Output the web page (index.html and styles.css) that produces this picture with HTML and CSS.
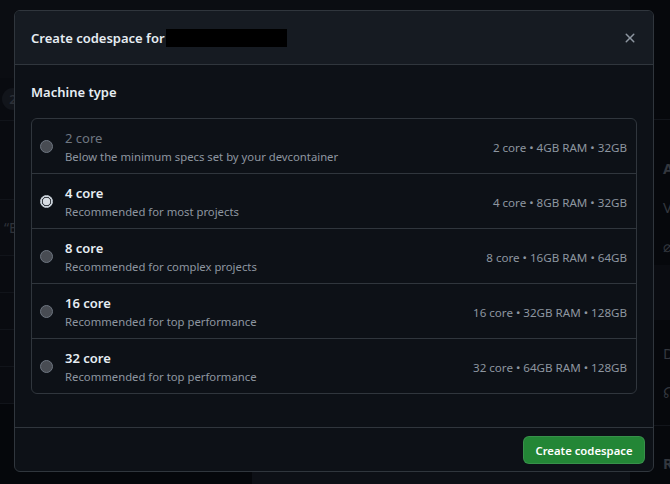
FILE: index.html
```html
<!DOCTYPE html>
<html lang="en">
<head>
<meta charset="utf-8">
<title>Create codespace</title>
<link rel="stylesheet" href="styles.css">
</head>
<body>
<div class="page">
  <div class="main">
    <div class="topbar"></div>
    <div class="prow first"><span class="counter">2</span></div>
    <div class="prow tall"></div>
    <div class="prow box"><span class="quote">“E</span></div>
    <div class="prow"></div>
    <div class="prow"></div>
    <div class="prow"></div>
    <div class="prow"></div>
    <div class="bottom">
      <div class="bottom-left"></div>
      <div class="bottom-panel"><span class="avatar"></span></div>
    </div>
  </div>
  <div class="side">
    <div class="side-top"></div>
    <div class="side-item h first">A</div>
    <div class="side-item">V</div>
    <div class="side-item">⌀</div>
    <div class="side-block"></div>
    <div class="side-item after-block">D</div>
    <div class="side-item">☊</div>
    <div class="side-sep"></div>
    <div class="side-item h last">R</div>
  </div>
</div>

<div class="dialog" role="dialog">
  <div class="dialog-header">
    <h1 class="dialog-title">Create codespace for <span class="redacted"></span></h1>
    <button class="close" aria-label="Close">
      <svg width="16" height="16" viewBox="0 0 16 16"><path d="M3.72 3.72a.75.75 0 0 1 1.06 0L8 6.94l3.22-3.22a.75.75 0 1 1 1.06 1.06L9.06 8l3.22 3.22a.75.75 0 1 1-1.06 1.06L8 9.06l-3.22 3.22a.75.75 0 0 1-1.06-1.06L6.94 8 3.72 4.78a.75.75 0 0 1 0-1.06Z" fill="currentColor"/></svg>
    </button>
  </div>
  <div class="dialog-body">
    <div class="label">Machine type</div>
    <ul class="machines">
      <li class="machine disabled">
        <span class="radio"></span>
        <div class="info"><div class="name">2 core</div><div class="desc">Below the minimum specs set by your devcontainer</div></div>
        <div class="specs">2 core • 4GB RAM • 32GB</div>
      </li>
      <li class="machine">
        <span class="radio checked"></span>
        <div class="info"><div class="name">4 core</div><div class="desc">Recommended for most projects</div></div>
        <div class="specs">4 core • 8GB RAM • 32GB</div>
      </li>
      <li class="machine">
        <span class="radio"></span>
        <div class="info"><div class="name">8 core</div><div class="desc">Recommended for complex projects</div></div>
        <div class="specs">8 core • 16GB RAM • 64GB</div>
      </li>
      <li class="machine">
        <span class="radio"></span>
        <div class="info"><div class="name">16 core</div><div class="desc">Recommended for top performance</div></div>
        <div class="specs">16 core • 32GB RAM • 128GB</div>
      </li>
      <li class="machine">
        <span class="radio"></span>
        <div class="info"><div class="name">32 core</div><div class="desc">Recommended for top performance</div></div>
        <div class="specs">32 core • 64GB RAM • 128GB</div>
      </li>
    </ul>
  </div>
  <div class="dialog-footer">
    <button class="btn-primary">Create codespace</button>
  </div>
</div>
</body>
</html>
```

FILE: styles.css
```css
* { box-sizing: border-box; }
html, body { margin: 0; padding: 0; }
body {
  width: 670px;
  height: 484px;
  overflow: hidden;
  background: #07090d;
  font-family: "Noto Sans", "Segoe UI", sans-serif;
  color: #e6edf3;
  position: relative;
}

/* dimmed page behind the dialog */
.page { display: flex; height: 484px; }
.main { flex: 1; display: flex; flex-direction: column; background: #090b10; }
.topbar { height: 78px; background: #0b0d12; }
.prow {
  height: 37px;
  border-bottom: 1px solid #11141a;
  display: flex;
  align-items: center;
  padding-left: 2px;
  color: #2a2e35;
  font-size: 14px;
  flex: none;
}
.prow.first { height: 43px; }
.prow.tall { height: 79px; }
.prow.box { height: 56px; background: #0a0c11; }
.counter {
  width: 22px; height: 22px; border-radius: 50%;
  background: #12151b; color: #2c3037;
  display: flex; align-items: center; justify-content: center;
  font-size: 13px; font-weight: 600;
}
.quote { padding-left: 2px; font-size: 14px; color: #2e3239; }
.bottom { flex: 1; display: flex; }
.bottom-left { width: 252px; background: #05070b; }
.bottom-panel { flex: 1; background: #0d1016; position: relative; overflow: hidden; }
.avatar {
  position: absolute; left: 165px; top: 0;
  width: 62px; height: 26px; border-radius: 50%;
  background: #22252b;
}
.side {
  width: 40px;
  background: #06080c;
  display: flex;
  flex-direction: column;
  padding-left: 33px;
  color: #33373e;
  font-size: 15px;
  font-weight: 600;
  overflow: hidden;
}
.side-top { height: 120px; border-bottom: 1px solid #12151b; margin-left: -33px; flex: none; }
.side-item { height: 39px; display: flex; align-items: center; font-weight: 400; flex: none; }
.side-item.h { font-weight: 700; }
.side-item.first { margin-top: 28px; }
.side-item.after-block { margin-top: 13px; }
.side-item.last { margin-top: 17px; }
.side-block { height: 55px; background: #0a0c11; margin-left: -33px; flex: none; }
.side-sep { height: 1px; background: #12151b; margin: 14px 0 0 -33px; flex: none; }

/* dialog (overlay) */
.dialog {
  position: absolute;
  left: 14px;
  top: 10px;
  width: 640px;
  height: 462px;
  background: #0d1117;
  border: 1px solid #30363d;
  border-radius: 6px;
  display: flex;
  flex-direction: column;
  overflow: hidden;
}
.dialog-header {
  height: 54px;
  flex: none;
  background: #161b22;
  border-bottom: 1px solid #30363d;
  display: flex;
  align-items: center;
  justify-content: space-between;
  padding: 0 16px;
}
.dialog-title {
  margin: 0;
  font-size: 13px;
  font-weight: 600;
  color: #e6edf3;
  display: flex;
  align-items: center;
  line-height: 20px;
}
.redacted {
  display: inline-block;
  width: 121px;
  height: 18px;
  background: #000;
  margin-left: 1px;
}
.close {
  background: none;
  border: 0;
  padding: 0;
  width: 16px;
  height: 16px;
  color: #8d96a0;
  display: flex;
  margin-right: -1px;
  margin-top: 1px;
}
.dialog-body {
  flex: 1;
  padding: 17px 16px 0 16px;
}
.label {
  font-size: 13px;
  font-weight: 600;
  line-height: 20px;
  color: #e6edf3;
  margin-bottom: 16px;
}
.machines {
  list-style: none;
  margin: 0;
  padding: 0;
  border: 1px solid #30363d;
  border-radius: 6px;
}
.machine {
  height: 55px;
  display: flex;
  align-items: center;
  padding: 0 9px 0 8px;
  border-top: 1px solid #30363d;
}
.machine:first-child { border-top: 0; height: 54px; }
.radio {
  width: 13px;
  height: 13px;
  border-radius: 50%;
  background: #484c53;
  border: 1px solid #6e7681;
  flex: none;
  margin-right: 12px;
  margin-top: 1px;
}
.radio.checked {
  background: radial-gradient(circle, #d7dce2 0 3.5px, #3a3f46 4px 4.6px, #c9d1d9 5px);
  border-color: #c9d1d9;
}
.info { flex: 1; padding-top: 2px; }
.name {
  font-size: 13px;
  font-weight: 600;
  line-height: 19px;
  color: #e6edf3;
}
.disabled .name { font-weight: 400; color: #6e7681; }
.desc {
  font-size: 11.3px;
  line-height: 18px;
  color: #8d96a0;
}
.specs {
  font-size: 11.6px;
  color: #8d96a0;
  white-space: nowrap;
  margin-top: 2px;
}
.dialog-footer {
  height: 44px;
  flex: none;
  border-top: 1px solid #30363d;
  display: flex;
  justify-content: flex-end;
  align-items: flex-start;
  padding: 8px 8px 0 0;
}
.btn-primary {
  width: 122px;
  height: 28px;
  background: #238636;
  border: 1px solid rgba(240, 246, 252, 0.1);
  border-radius: 6px;
  color: #fff;
  font-family: inherit;
  font-size: 11.3px;
  font-weight: 600;
  padding: 0;
}
```
